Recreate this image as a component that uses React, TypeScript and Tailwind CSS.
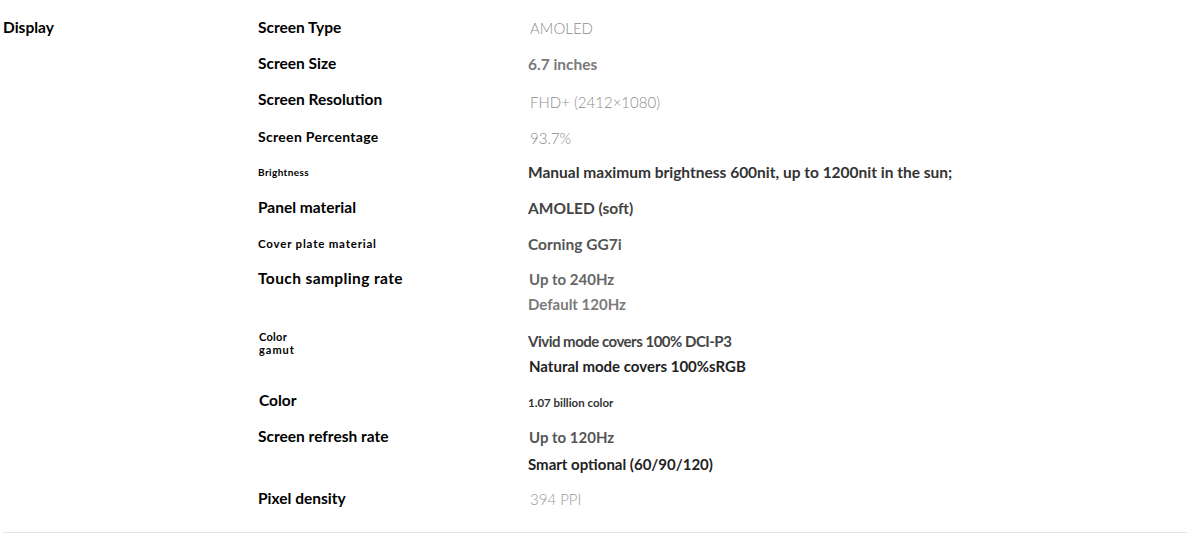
import React from "react";

const F = { fontFamily: "Lato, 'Open Sans', sans-serif" };

function Row({ label, children, h = "h-[36px]", labelCls = "text-[15.5px] font-bold" }: { label: React.ReactNode; children: React.ReactNode; h?: string; labelCls?: string }) {
  return (
    <div className={`flex ${h} items-center`}>
      <div className={`w-[270px] text-black ${labelCls}`}>{label}</div>
      <div className="flex-1">{children}</div>
    </div>
  );
}

export default function App() {
  return (
    <div className="w-[1190px] h-[538px] bg-white px-[3px] pt-[10px]" style={F}>
      <div className="flex">
        <div className="w-[255px] h-[36px] flex items-center text-[15.5px] font-bold text-black">Display</div>
        <div className="flex-1 flex flex-col">
          <Row label="Screen Type">
            <span className="ml-[2px] text-[15px] font-light text-[#8c8c8c]">AMOLED</span>
          </Row>
          <Row label="Screen Size">
            <span className="text-[15.5px] font-bold text-[#7a7a7a]">6.7 inches</span>
          </Row>
          <Row label="Screen Resolution">
            <span className="ml-[2px] text-[15px] font-light text-[#8c8c8c] relative top-[2px]">FHD+ (2412×1080)</span>
          </Row>
          <Row label="Screen Percentage" labelCls="text-[14px] font-bold tracking-[0.3px]">
            <span className="ml-[2px] text-[15px] font-light text-[#8c8c8c] relative top-[2px]">93.7%</span>
          </Row>
          <Row label="Brightness" labelCls="text-[10px] font-bold tracking-[0.4px]">
            <span className="text-[15.5px] font-bold text-[#333]">Manual maximum brightness 600nit, up to 1200nit in the sun;</span>
          </Row>
          <Row label="Panel material">
            <span className="text-[15.5px] font-bold text-[#444]">AMOLED (soft)</span>
          </Row>
          <Row label="Cover plate material" labelCls="text-[11.5px] font-bold tracking-[0.8px]">
            <span className="text-[15.5px] font-bold text-[#555]">Corning GG7i</span>
          </Row>
          {/* Touch sampling rate */}
          <div className="flex h-[61px]">
            <div className="w-[270px] h-[34px] flex items-center text-[15.5px] font-bold tracking-[0.4px] text-black">Touch sampling rate</div>
            <div className="flex-1 flex flex-col">
              <div className="h-[34px] flex items-center ml-[1px] text-[15px] font-bold text-[#666]">Up to 240Hz</div>
              <div className="h-[16px] flex items-center text-[15px] font-bold text-[#7a7a7a]">Default 120Hz</div>
            </div>
          </div>
          {/* Color gamut */}
          <div className="flex h-[60px]">
            <div className="w-[270px] pt-[7px] pl-[1px] text-[11px] leading-[13px] font-bold text-black">
              <div className="tracking-[0.3px]">Color</div>
              <div className="tracking-[1px]">gamut</div>
            </div>
            <div className="flex-1 flex flex-col">
              <div className="h-[36px] flex items-center text-[15px] font-bold tracking-[-0.5px] text-[#444]">Vivid mode covers 100% DCI-P3</div>
              <div className="h-[14px] flex items-center ml-[1px] text-[15px] font-bold text-[#222]">Natural mode covers 100%sRGB</div>
            </div>
          </div>
          <Row label={<span className="ml-[1px]">Color</span>}>
            <span className="text-[11.5px] font-bold text-[#333]">1.07 billion color</span>
          </Row>
          {/* Refresh rate */}
          <div className="flex h-[62px]">
            <div className="w-[270px] h-[36px] flex items-center text-[15.5px] font-bold text-black">Screen refresh rate</div>
            <div className="flex-1 flex flex-col">
              <div className="h-[36px] flex items-center ml-[1px] text-[15px] font-bold text-[#555]">Up to 120Hz</div>
              <div className="h-[18px] flex items-center text-[15px] font-bold text-[#222]">Smart optional (60/90/120)</div>
            </div>
          </div>
          <Row label="Pixel density">
            <span className="ml-[2px] text-[15px] font-light text-[#999]">394 PPI</span>
          </Row>
        </div>
      </div>
      <div className="mt-[15px] border-t border-[#e6e6e6]" />
    </div>
  );
}
